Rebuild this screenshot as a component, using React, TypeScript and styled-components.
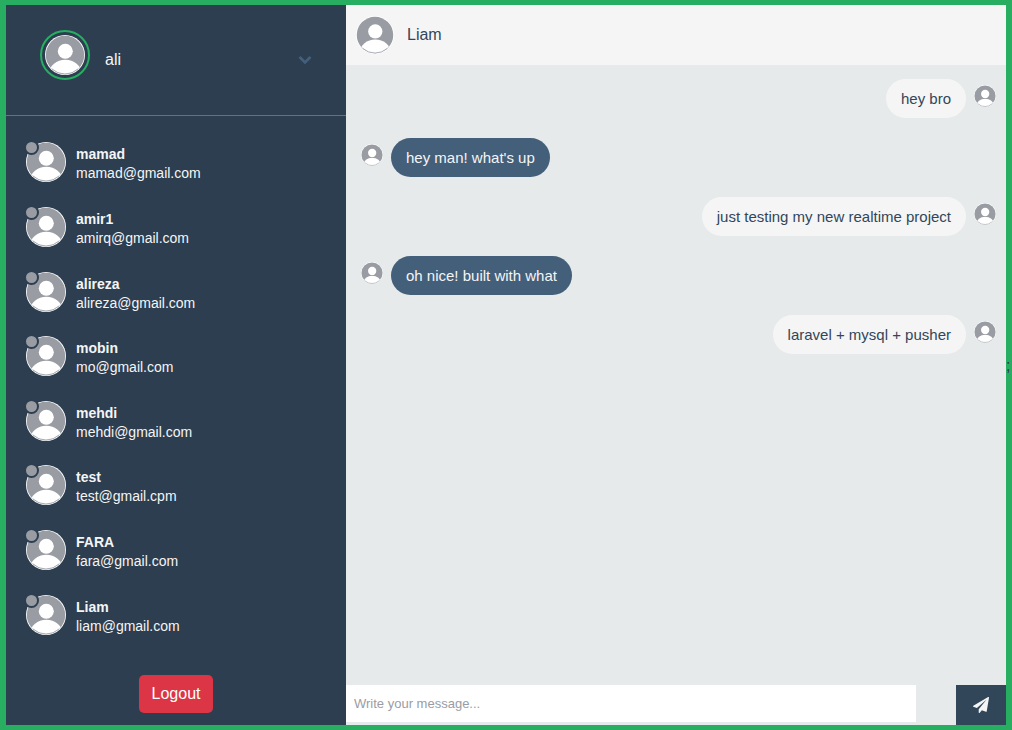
import React from "react";
import styled, { createGlobalStyle, css } from "styled-components";

const GlobalStyle = createGlobalStyle`
  *, *::before, *::after { box-sizing: border-box; }
  body {
    margin: 0;
    background: #27ae60;
    color: #212529;
    font-family: "Liberation Sans", Arial, sans-serif;
    font-size: 16px;
    line-height: 24px;
  }
`;

const Frame = styled.div`
  display: grid;
  grid-template-columns: 340px minmax(0, 1fr) 6px;
  align-items: stretch;
  min-height: 100vh;
  padding: 5px 0 5px 6px;
`;

const Edge = styled.span`
  align-self: center;
  padding-top: 2px;
  color: #2c3e50;
`;

const Sidebar = styled.aside`
  display: flex;
  flex-direction: column;
  background: #2c3e50;
  color: #f5f5f5;
`;

const Profile = styled.header`
  display: flex;
  align-items: flex-start;
  height: 111px;
  padding: 25px 34px;
  border-bottom: 1px solid #64717e;
`;

const Ring = styled.div`
  display: flex;
  padding: 3px;
  border: 2px solid #27ae60;
  border-radius: 50%;
`;

const ProfileName = styled.p`
  flex: 1;
  margin: 0;
  padding: 18px 0 0 15px;
`;

const ExpandButton = styled.button`
  display: flex;
  margin: 22px 0 0;
  padding: 0;
  border: 0;
  background: none;
  color: #435f7a;
  cursor: pointer;
`;

const Contacts = styled.ul`
  flex: 1;
  display: grid;
  grid-auto-rows: minmax(60px, 1fr);
  align-items: center;
  margin: 0;
  padding: 14px 20px 0;
  list-style: none;
`;

const Contact = styled.li`
  display: flex;
  align-items: center;
  gap: 10px;
  font-size: 14px;
  line-height: 19px;
`;

const ContactAvatar = styled.div`
  position: relative;
  display: flex;
`;

const Status = styled.span`
  position: absolute;
  top: -2px;
  left: -2px;
  width: 15px;
  height: 15px;
  border: 2px solid #2c3e50;
  border-radius: 50%;
  background: #999da3;
`;

const ContactText = styled.div`
  display: flex;
  flex-direction: column;
  padding-top: 4px;
`;

const SidebarFooter = styled.footer`
  display: flex;
  justify-content: center;
  padding: 28px 0 12px;
`;

const LogoutButton = styled.button`
  height: 38px;
  padding: 0 13px;
  border: 0;
  border-radius: 5px;
  background: #dc3545;
  color: #fff;
  font: inherit;
  cursor: pointer;
`;

const Chat = styled.main`
  display: flex;
  flex-direction: column;
  background: #e6eaea;
`;

const ChatHeader = styled.header`
  display: flex;
  align-items: center;
  gap: 13px;
  height: 60px;
  padding: 0 10px;
  background: #f5f5f5;
  color: #32465a;
`;

const Messages = styled.ul`
  flex: 1;
  display: flex;
  flex-direction: column;
  gap: 20px;
  margin: 0;
  padding: 14px 10px 14px 15px;
  list-style: none;
`;

const Message = styled.li<{ $own: boolean }>`
  display: flex;
  flex-direction: ${({ $own }) => ($own ? "row-reverse" : "row")};
  align-items: flex-start;
  gap: 8px;
  > svg {
    margin-top: 6px;
  }
`;

const Bubble = styled.p<{ $own: boolean }>`
  margin: 0;
  padding: 10px 15px;
  border-radius: 20px;
  font-size: 15px;
  line-height: 19px;
  ${({ $own }) =>
    $own
      ? css`background: #f5f5f5; color: #32465a;`
      : css`background: #435f7a; color: #f5f5f5;`}
`;

const Composer = styled.form`
  display: flex;
  gap: 40px;
  height: 40px;
`;

const MessageInput = styled.input`
  flex: 1;
  min-width: 0;
  height: 37px;
  padding: 0 8px;
  border: 0;
  background: #fff;
  color: #32465a;
  font-family: inherit;
  font-size: 13px;
  &::placeholder {
    color: #999da3;
    opacity: 1;
  }
`;

const SendButton = styled.button`
  display: flex;
  align-items: center;
  justify-content: center;
  width: 50px;
  padding: 0;
  border: 0;
  background: #32465a;
  color: #f5f5f5;
  cursor: pointer;
`;

function Avatar({ size }: { size: number }) {
  const id = React.useId();
  return (
    <svg width={size} height={size} viewBox="0 0 40 40" aria-hidden="true">
      <clipPath id={id}>
        <circle cx="20" cy="20" r="19" />
      </clipPath>
      <circle cx="20" cy="20" r="20" fill="#fff" />
      <circle cx="20" cy="20" r="19.2" fill="#999da3" />
      <circle cx="20.3" cy="16.3" r="7.5" fill="#fff" />
      <ellipse cx="20.3" cy="38" rx="16" ry="13.2" fill="#fff" clipPath={`url(#${id})`} />
      <path d="M7 34 A19.3 19.3 0 0 0 33 34" fill="none" stroke="#a9adb3" strokeWidth="1" />
    </svg>
  );
}

function ChevronIcon() {
  return (
    <svg width="14" height="14" viewBox="0 0 1792 1792" fill="currentColor" aria-hidden="true">
      <path d="M1683 808l-742 741q-19 19-45 19t-45-19L109 808q-19-19-19-45.500t19-45.500l166-165q19-19 45-19t45 19l531 531 531-531q19-19 45-19t45 19l166 165q19 19 19 45.500t-19 45.500z" />
    </svg>
  );
}

function PlaneIcon() {
  return (
    <svg width="16" height="16" viewBox="0 0 1792 1792" fill="currentColor" aria-hidden="true">
      <path d="M1764 11q33 24 27 64l-256 1536q-5 29-32 45-14 8-31 8-11 0-24-5l-453-185-242 295q-18 23-49 23-13 0-22-4-19-7-30.500-23.500T640 1728v-349l864-1059-1069 925-395-162q-37-14-40-55-2-40 32-59L1696 9q15-9 32-9 20 0 36 11z" />
    </svg>
  );
}

const contacts = [
  { name: "mamad", email: "mamad@gmail.com" },
  { name: "amir1", email: "amirq@gmail.com" },
  { name: "alireza", email: "alireza@gmail.com" },
  { name: "mobin", email: "mo@gmail.com" },
  { name: "mehdi", email: "mehdi@gmail.com" },
  { name: "test", email: "test@gmail.cpm" },
  { name: "FARA", email: "fara@gmail.com" },
  { name: "Liam", email: "liam@gmail.com" },
];

const messages = [
  { own: true, text: "hey bro" },
  { own: false, text: "hey man! what's up" },
  { own: true, text: "just testing my new realtime project" },
  { own: false, text: "oh nice! built with what" },
  { own: true, text: "laravel + mysql + pusher" },
];

export default function App() {
  return (
    <>
      <GlobalStyle />
      <Frame>
        <Sidebar>
          <Profile>
            <Ring>
              <Avatar size={40} />
            </Ring>
            <ProfileName>ali</ProfileName>
            <ExpandButton type="button" aria-label="Expand profile">
              <ChevronIcon />
            </ExpandButton>
          </Profile>
          <Contacts>
            {contacts.map((c) => (
              <Contact key={c.email}>
                <ContactAvatar>
                  <Avatar size={40} />
                  <Status />
                </ContactAvatar>
                <ContactText>
                  <strong>{c.name}</strong>
                  <span>{c.email}</span>
                </ContactText>
              </Contact>
            ))}
          </Contacts>
          <SidebarFooter>
            <LogoutButton type="button">Logout</LogoutButton>
          </SidebarFooter>
        </Sidebar>
        <Chat>
          <ChatHeader>
            <Avatar size={38} />
            <span>Liam</span>
          </ChatHeader>
          <Messages>
            {messages.map((m) => (
              <Message key={m.text} $own={m.own}>
                <Avatar size={22} />
                <Bubble $own={m.own}>{m.text}</Bubble>
              </Message>
            ))}
          </Messages>
          <Composer onSubmit={(e) => e.preventDefault()}>
            <MessageInput type="text" aria-label="Message" placeholder="Write your message..." />
            <SendButton type="submit" aria-label="Send">
              <PlaneIcon />
            </SendButton>
          </Composer>
        </Chat>
        <Edge>;</Edge>
      </Frame>
    </>
  );
}
